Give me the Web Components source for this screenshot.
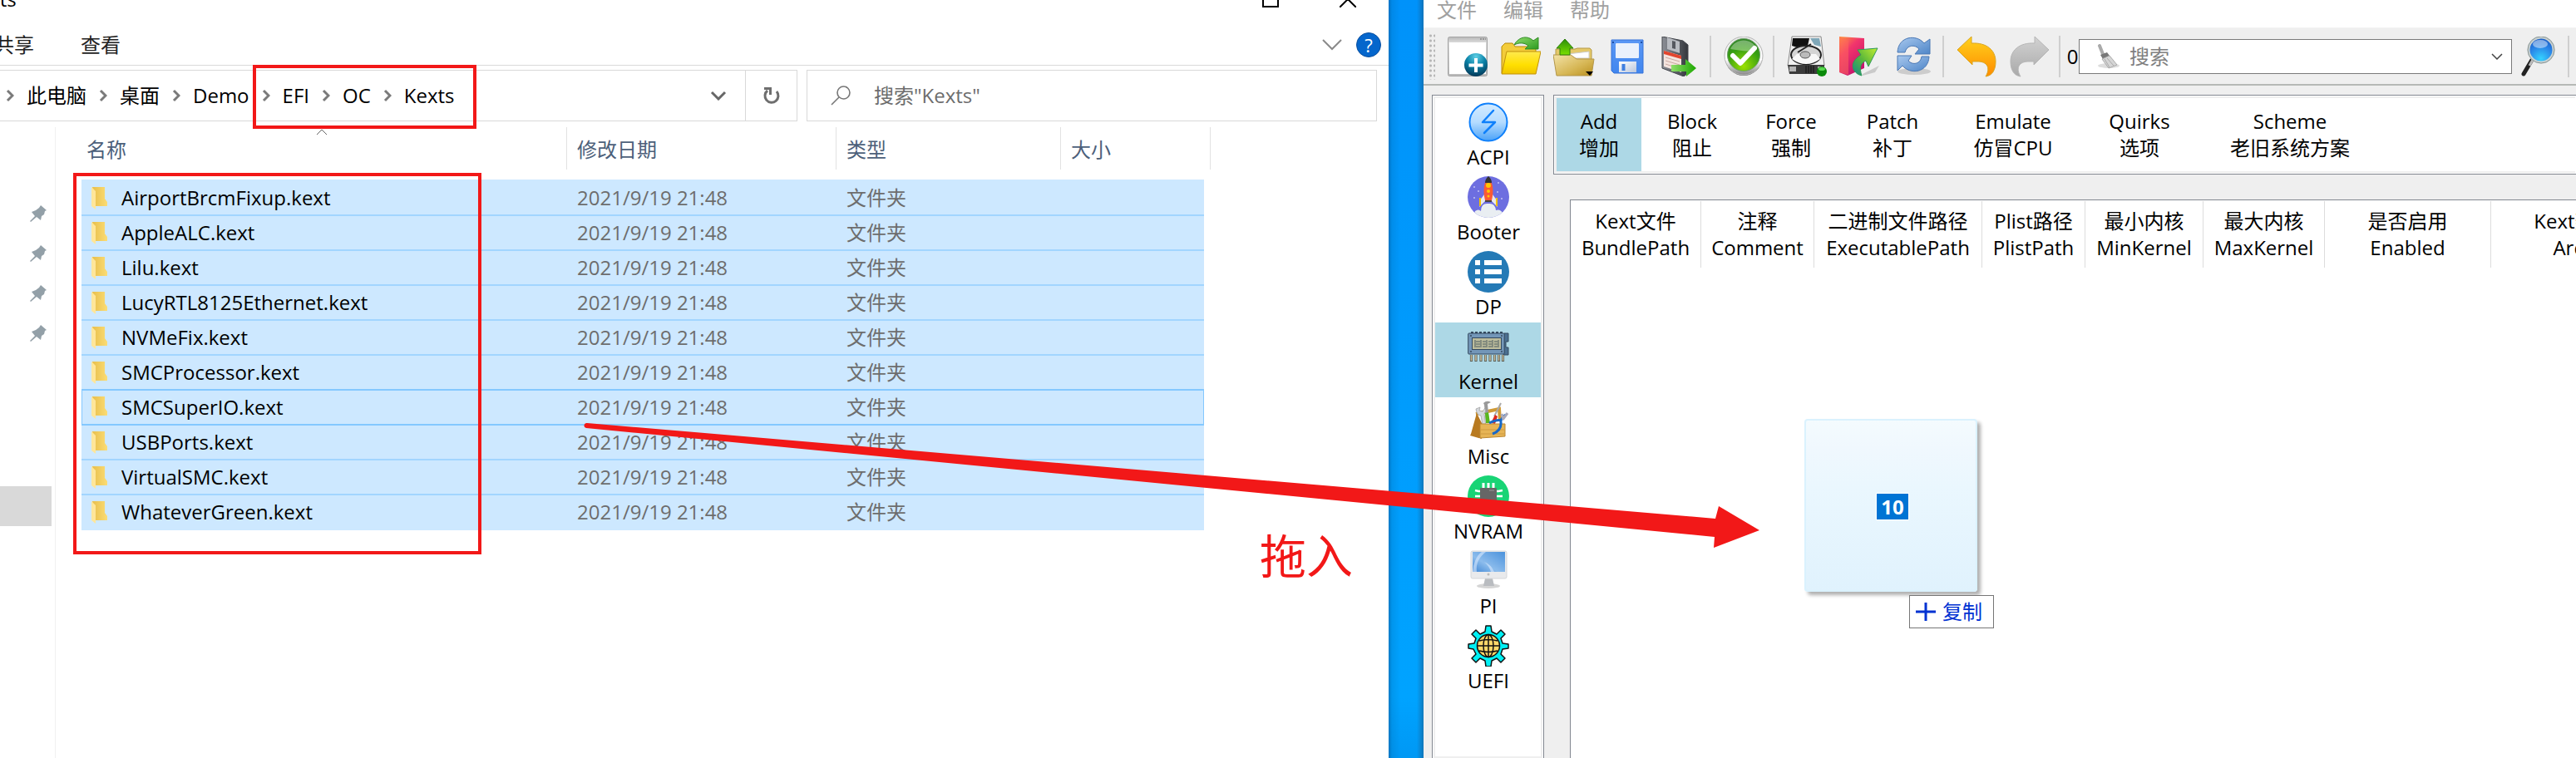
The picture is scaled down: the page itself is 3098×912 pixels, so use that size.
<!DOCTYPE html>
<html lang="zh-CN">
<head>
<meta charset="utf-8">
<title>Kexts</title>
<style>
  html, body { margin: 0; height: 100%; }
  body { font: 24px/32px "Open Sans", "Noto Sans CJK SC", sans-serif; color: #000; background: #fff; overflow: hidden; }
</style>
</head>
<body>
<desk-top>
  <explorer-window slot="left"></explorer-window>
  <config-window slot="right"></config-window>
</desk-top>

<script>
const ICONS = {
  page: ['0 0 48 48', `<defs><linearGradient id="a" x2="0" y2="1"><stop stop-color="#b8b8b8"/><stop offset=".15" stop-color="#ddd"/><stop offset="1" stop-color="#b9b9b9"/></linearGradient><radialGradient id="b" cx=".5" cy=".15" r=".9"><stop stop-color="#5fd0e6"/><stop offset=".45" stop-color="#0b83a8"/><stop offset="1" stop-color="#02304f"/></radialGradient></defs>
    <rect x=".5" y=".5" width="47" height="47" rx="2" fill="url(#a)" stroke="#a5a5a5"/><rect x="2" y="7" width="44" height="38" fill="#fff"/><path d="M39 3h2M42 3h2M45 3h1" stroke="#666"/><circle cx="34" cy="34" r="14" fill="url(#b)"/><path d="M34 26v17M25.500 34.500h17" stroke="#fff" stroke-width="4"/>`],
  open: ['0 0 48 48', `<defs><linearGradient id="a" x2="0" y2="1"><stop stop-color="#ffe94d"/><stop offset=".6" stop-color="#ffdf00"/><stop offset="1" stop-color="#f0c400"/></linearGradient><linearGradient id="b" x2="1" y2="1"><stop stop-color="#8fdc6a"/><stop offset="1" stop-color="#2c9a20"/></linearGradient></defs>
    <path d="M1 44V12l4-4h9l3 4h25v10" fill="#f3cc3a" stroke="#b98a07"/><path d="M7 18h41l-6 27H1z" fill="url(#a)" stroke="#c29208"/><path d="M16 10C22-1 33-1 39 5l6-4v14H29l4-4c-5-4-11-4-17-1z" fill="url(#b)" stroke="#2d8a20"/>`],
  up: ['0 0 50 48', `<defs><linearGradient id="a" x2="1" y2="1"><stop stop-color="#f3e3a8"/><stop offset=".6" stop-color="#d6b654"/><stop offset="1" stop-color="#b98f1f"/></linearGradient><linearGradient id="b" x2="0" y2="1"><stop stop-color="#2c8f0a"/><stop offset="1" stop-color="#7be000"/></linearGradient></defs>
    <path d="M3 26V15h23l3-1h15l2 2v14z" fill="#e5c96a" stroke="#b59a49"/><path d="M17 21l26-3v8H17z" fill="#fff" stroke="#ccc"/><path d="M0 22h21l7 5h21l-3 20H4z" fill="url(#a)" stroke="#b3964a"/><path d="M14 3l10 11h-4v8H8v-8H4z" fill="url(#b)" stroke="#2c7c0a"/><path d="M39 42h9l-4 5z"/>`],
  save: ['0 0 48 48', `<defs><linearGradient id="a" x2="0" y2="1"><stop stop-color="#5a97f5"/><stop offset="1" stop-color="#4186ee"/></linearGradient><linearGradient id="b" x2="1" y2="1"><stop stop-color="#fff"/><stop offset="1" stop-color="#b9c6dc"/></linearGradient></defs>
    <path d="M5 4h38v40H8l-3-3z" fill="url(#a)" stroke="#3672d8"/><rect x="10" y="8" width="28" height="18" rx="1" fill="#eaf1fc"/><rect x="14" y="30" width="21" height="13" fill="url(#b)"/><path d="M17.500 33h4v8h-4z" fill="#3f7fe0"/><path d="M6 6h2v2H6zM40 6h2v2h-2z" fill="#1d4ea6"/>`],
  export: ['0 0 48 48', `<defs><linearGradient id="a"><stop stop-color="#8d9097"/><stop offset="1" stop-color="#33363c"/></linearGradient><linearGradient id="b"><stop stop-color="#8fdd6a"/><stop offset="1" stop-color="#1da800"/></linearGradient></defs>
    <path d="M2 0l25 5 6 5v34l-5 4L2 38z" fill="url(#a)" stroke="#44474d"/><path d="M8 1l15 5v14L8 15z" fill="#b9bcc2"/><path d="M14 5l4 1v9l-4-1z" fill="#55585f"/><path d="M4 17l21 6v20L4 36z" fill="#f4e4de"/><path d="M4 17l21 6v4L4 21z" fill="#e2452e"/><path d="M6 25l17 5M6 29l17 5M6 33l12 4" stroke="#c9a8a0"/><path d="M13 34h17v-7l13 11-12 10v-6H13z" fill="url(#b)"/>`],
  check: ['0 0 48 48', `<defs><linearGradient id="a" x2="0" y2="1"><stop stop-color="#e8e8e8"/><stop offset=".6" stop-color="#fff"/><stop offset="1" stop-color="#888"/></linearGradient><radialGradient id="b" cx=".5" cy=".85" r=".9"><stop stop-color="#9be000"/><stop offset=".6" stop-color="#38a012"/><stop offset="1" stop-color="#2c7d28"/></radialGradient></defs>
    <ellipse cx="24" cy="26" rx="22" ry="21" fill="#777"/><circle cx="24" cy="23" r="23" fill="url(#a)" stroke="#b5b5b5"/><circle cx="24" cy="22" r="19.500" fill="url(#b)" stroke="#6f9f6a"/><path d="M8 15C14 1 34 1 40 15 32 20 18 16 8 15z" fill="#fff" opacity=".35"/><path d="M11 23l9 9 17-18" fill="none" stroke="#fff" stroke-width="6" stroke-linecap="round" stroke-linejoin="round"/>`],
  disk: ['0 0 48 50', `<path d="M6 1h35l4 35H1z" fill="#f0f0f0" stroke="#888"/><path d="M7 3h20l-2 9-10 3-9-3z" fill="#111"/><path d="M28 3h11l2 10-8-2z" fill="#7fa7b8"/><ellipse cx="23" cy="23" rx="18" ry="11" fill="#d4d4d4" stroke="#222" stroke-width="2"/><path d="M6 28q17 12 34 0l-5-6H12z" fill="#f8f8f8"/><ellipse cx="22" cy="23" rx="6" ry="4" fill="#bbb" stroke="#555"/><path d="M13 20l16-10" stroke="#222" stroke-width="2"/><path d="M1 35h44v11H3z" fill="#3b3b3b"/><path d="M3 37h8v6H3zM37 37h7v6h-7z" fill="#b5b5b5"/><path d="M23 36v9M26 36v9M29 36v9M32 36v9" stroke="#111"/><circle cx="42" cy="43" r="6" fill="#0a8a0a"/><ellipse cx="42" cy="40" rx="4" ry="2" fill="#58d84e"/>`],
  install: ['0 0 50 50', `<defs><linearGradient id="a" x2=".6" y2="1"><stop stop-color="#ff9a3c"/><stop offset=".4" stop-color="#f2356c"/><stop offset="1" stop-color="#c3146c"/></linearGradient><linearGradient id="b" x1="1" x2="0" y2="1"><stop stop-color="#c3ee30"/><stop offset=".5" stop-color="#5cb83a"/><stop offset="1" stop-color="#108a8a"/></linearGradient></defs>
    <path d="M28 46l20-10-5 8-15 4z" fill="#bbb" opacity=".7"/><path d="M0 1l30 2v36L10 48 0 44z" fill="url(#a)"/><path d="M0 1l11 5v41L0 44z" fill="#ff6a5a" opacity=".5"/><path d="M22 17l24-2-11 22-3-7c-7 3-8 9-5 18-12-3-16-16-1-25z" fill="url(#b)" stroke="#2f9a58"/>`],
  sync: ['0 0 48 48', `<defs><linearGradient id="a" x2="1" y2="1"><stop stop-color="#a8c8ee"/><stop offset="1" stop-color="#4f86c8"/></linearGradient></defs>
    <ellipse cx="25" cy="42" rx="20" ry="4" fill="#ccc"/><g fill="url(#a)" stroke="#4b78b4"><path d="M5 19C6-1 28-3 37 8l7-5v18H26l5-6c-5-6-15-5-17 4z"/><path d="M43 24c-1 20-23 22-32 11l-6 6V23h17l-4 6c5 6 15 4 16-5z"/></g>`],
  undo: ['0 0 48 50', `<defs><linearGradient id="a" x2="0" y2="1"><stop stop-color="#ffd21c"/><stop offset="1" stop-color="#ff8a00"/></linearGradient></defs><path d="M1 17L18 1v8C37 8 47 18 47 31c0 10-4 17-12 18 5-8 4-17-8-18h-8v4z" fill="url(#a)" stroke="#d9a520"/>`],
  redo: ['0 0 48 50', `<defs><linearGradient id="a" x2="0" y2="1"><stop stop-color="#d2d2d2"/><stop offset="1" stop-color="#a9a9a9"/></linearGradient></defs><path d="M47 17L30 1v8C11 8 1 18 1 31c0 10 4 17 12 18-5-8-4-17 8-18h8v4z" fill="url(#a)" stroke="#b5b5b5"/>`],
  find: ['0 0 48 48', `<defs><radialGradient id="a" cx=".5" cy=".85" r=".8"><stop stop-color="#35d2ff"/><stop offset=".6" stop-color="#2a86e8"/><stop offset="1" stop-color="#1c5fc8"/></radialGradient></defs>
    <path d="M16 28L6 45" stroke="#222" stroke-width="5" stroke-linecap="round"/><path d="M17 28l-4 7" stroke="#bbb" stroke-width="3"/><circle cx="27" cy="16" r="15" fill="url(#a)" stroke="#c9d2d2" stroke-width="3"/><circle cx="27" cy="16" r="16" fill="none" stroke="#8b9696"/><ellipse cx="26" cy="9" rx="9" ry="5" fill="#fff" opacity=".45"/>`],
  broom: ['0 0 28 30', `<ellipse cx="14" cy="26" rx="13" ry="3" fill="#ddd"/><path d="M3 2l4 10" stroke="#aaa" stroke-width="4" stroke-linecap="round"/><path d="M4 13l8-3 3 4-8 4z" fill="#777"/><path d="M6 18l9-4 9 11-10 4z" fill="#d5d5d5" stroke="#aaa"/><path d="M9 18l6 10M12 17l8 9" stroke="#aaa"/>`],
  acpi: ['0 0 50 50', `<defs><linearGradient id="a" x2="0" y2="1"><stop stop-color="#d3ebff"/><stop offset=".5" stop-color="#b5dcff"/><stop offset="1" stop-color="#4aa2f8"/></linearGradient></defs><circle cx="25" cy="25" r="22.500" fill="url(#a)" stroke="#0f80fb" stroke-width="2"/><path d="M31 11L18 25h15L20 38" fill="none" stroke="#0f80fb" stroke-width="2.500" stroke-linecap="round" stroke-linejoin="round"/>`],
  booter: ['0 0 50 50', `<clipPath id="c"><circle cx="25" cy="25" r="25"/></clipPath><g clip-path="url(#c)"><path d="M0 0h50v50H0z" fill="#6d6ee0"/><path d="M9 42q4-3 7 0 0-10 9-9 8-1 9 8 5-2 8 3v6H6z" fill="#e9eef2"/></g><path d="M20 22l-6 8v7l8-8zM30 22l6 8v7l-8-8z" fill="#e8e8ee"/><path d="M15 26v10M35 26v10" stroke="#f2c200" stroke-width="2"/><path d="M25 1c7 8 6 20 4 28h-8c-2-8-3-20 4-28z" fill="#fb5a36"/><path d="M25 0c3 3 4 5 4 8h-8c0-3 1-5 4-8z" fill="#333"/><path d="M21 29h8v2h-8z" fill="#444"/><circle cx="25" cy="11" r="3" fill="#ffc800"/><circle cx="25" cy="18" r="2" fill="#ffc800"/><circle cx="25" cy="24" r="1.500" fill="#ffc800"/><g fill="#fff"><circle cx="8" cy="13" r=".8"/><circle cx="13" cy="18" r=".8"/><circle cx="37" cy="8" r=".8"/><circle cx="41" cy="27" r=".8"/><circle cx="8" cy="26" r=".8"/><circle cx="36" cy="19" r=".8"/></g>`],
  dp: ['0 0 50 50', `<circle cx="25" cy="25" r="25" fill="#247ab6"/><path d="M9 11h6v6H9zM20 11h21v6H20zM9 22h6v6H9zM20 22h21v6H20zM9 33h6v6H9zM20 33h21v6H20z" fill="#fff"/>`],
  kernel: ['0 0 50 50', `<path d="M44 9h5v10h-3v7h3v9h-6z" fill="#4a6f90" stroke="#34495e"/><path d="M4 8h40" stroke="#34495e" stroke-width="2" stroke-dasharray="3 2"/><rect x=".7" y="9" width="43.500" height="25" rx="1" fill="#7396b8" stroke="#34495e"/><rect x="5.500" y="14.500" width="35" height="14" fill="#bcbc9c" stroke="#34495e"/><path d="M9 17v9M16 17v9M23 17v9M30 17v9M37 17v9M10 19h5M10 22h5M10 25h5M18 19h4M18 22h4M18 25h4M25 19h4M25 22h4M25 25h4M32 19h4M32 22h4M32 25h4" stroke="#4a5a60"/><path d="M4.500 35v8M10 35v8M16 35v8M21.500 35v8M27 35v8M32.500 35v8M37.500 35v8M42.500 35v8" stroke="#5b605a" stroke-width="3.200"/><path d="M4.500 35v7M10 35v7M16 35v7M21.500 35v7M27 35v7M32.500 35v7M37.500 35v7M42.500 35v7" stroke="#c4b796" stroke-width="1.600"/><g fill="#34495e"><circle cx="4" cy="12" r="1"/><circle cx="41" cy="12" r="1"/><circle cx="4" cy="31" r="1"/><circle cx="41" cy="31" r="1"/></g>`],
  misc: ['0 0 50 50', `<path d="M10 16l28-6 1 14" fill="none" stroke="#d09a35" stroke-width="4"/><path d="M4 40l7-25 7 14-1 17-14-4z" fill="#b87a20"/><path d="M19 3q4-4 9-1l-4 2 2 22h-4L20 5z" fill="#9a9a9a"/><path d="M21 15l4-1 2 13h-5z" fill="#58b81c"/><path d="M10 10q1 8 6 8l2 12h4l-2-14q3-3 1-7l-3 4-4-1 1-4z" fill="#d5d8dc" stroke="#999" stroke-width=".7"/><path d="M40 3l-8 16" stroke="#aaa" stroke-width="2"/><path d="M33 17l-5 10 5 1 3-9z" fill="#e02418"/><path d="M15 28h30v15l-30 2z" fill="#e6b455" stroke="#bb8732"/><path d="M16 35h28M16 40h28" stroke="#cf9a40"/><path d="M46 17q-7 5-6 9 1 10-10 14M26 27q10-5 15-3" fill="none" stroke="#1768c8" stroke-width="3"/><path d="M48 15l-6 8M41 16l2 6" stroke="#aab" stroke-width="3"/>`],
  nvram: ['0 0 50 50', `<circle cx="25" cy="25" r="25" fill="#18d475"/><path d="M19 9v32M25 9v32M31 9v32" stroke="#fff" stroke-width="3"/><path d="M9 18l4 1h24l5-1M9 25h33M9 32h33" fill="none" stroke="#fff" stroke-width="2.500"/><rect x="15" y="15" width="20" height="20" rx="1" fill="#666"/><path d="M26 18h6" stroke="#999"/>`],
  pi: ['0 0 50 50', `<defs><linearGradient id="a" x1="1" x2="0" y2="1"><stop stop-color="#4b92dc"/><stop offset=".6" stop-color="#8cbcec"/><stop offset="1" stop-color="#3f86d4"/></linearGradient></defs><ellipse cx="25" cy="43" rx="14" ry="3" fill="#d5d5d5"/><path d="M21 34h9l2 9H19z" fill="#b9bcc0"/><rect x="4" y="1" width="43" height="33" rx="2" fill="#e9eaec" stroke="#d5d7da"/><rect x="6" y="2" width="39" height="24" fill="url(#a)"/><path d="M6 26Q8 8 17 2h5Q9 12 11 26zM20 14q8 3 12 12h-4q-2-7-8-12z" fill="#d8eaff" opacity=".6"/><circle cx="25" cy="29" r="1.500" fill="#bbb"/>`],
  uefi: ['0 0 50 50', `<g fill="#00f0f4" stroke="#111" stroke-width="1.500" stroke-linejoin="round"><path d="M21 8l1-7h6l1 7 6 3 5-5 5 5-5 5 2 6 7 1v5l-7 1-2 6 5 5-5 5-5-5-6 3-1 7h-6l-1-7-6-3-5 5-5-5 5-5-3-6-6-1v-5l7-1 2-6-5-5 5-5 5 5z"/></g><g fill="none" stroke="#111" stroke-width="1.500"><circle cx="25" cy="25" r="13.500" fill="#ffd86a"/><ellipse cx="25" cy="25" rx="6" ry="13.500"/><path d="M25 11v28M11.500 25h27M14 19q11-3 22 0M14 31q11 3 22 0"/></g>`],
  pin: ['0 0 20 20', `<path d="M13 0l7 6-2 1-1 4-3 2-1 5-5-4-7 6-1-1 6-6-4-5 5-2 4-3z" fill="#93a0a8"/>`],
  folder: ['0 0 20 27', `<defs><linearGradient id="a"><stop stop-color="#e8bf4c"/><stop offset="1" stop-color="#fbdc74"/></linearGradient></defs><path d="M1 0h15v14l3 4v5H5z" fill="url(#a)"/><path d="M0 0l5 5v22l-5-4z" fill="#ffe69a"/>`],
  crumb: ['0 0 10 16', `<path d="M2 2l6 6-6 6" fill="none" stroke="#7a7a7a" stroke-width="3"/>`],
  down: ['0 0 24 14', `<path d="M1 1l11 11L23 1" fill="none" stroke="#8a8a8a" stroke-width="2"/>`],
  dropdown: ['0 0 20 12', `<path d="M2 2l8 8 8-8" fill="none" stroke="#666" stroke-width="3"/>`],
  thin: ['0 0 14 8', `<path d="M1 1l6 6 6-6" fill="none" stroke="#444" stroke-width="1.500"/>`],
  sort: ['0 0 14 8', `<path d="M1 7l6-6 6 6" fill="none" stroke="#666"/>`],
  reload: ['0 0 20 22', `<path d="M5 5a8 8 0 1 0 11 1" fill="none" stroke="#6e6e6e" stroke-width="3"/><path d="M1 1h9v9H7V4H1z" fill="#6e6e6e"/>`],
  lens: ['0 0 24 24', `<circle cx="15.500" cy="8.500" r="7.500" fill="none" stroke="#777" stroke-width="1.600"/><path d="M10 14L1 23" stroke="#777" stroke-width="1.600"/>`],
  maximize: ['0 0 20 20', `<path d="M1 1h18v18H1z" fill="none" stroke="#000" stroke-width="2"/>`],
  close: ['0 0 20 20', `<path d="M0 0l20 20M20 0L0 20" stroke="#000" stroke-width="2"/>`],
  help: ['0 0 30 30', `<circle cx="15" cy="15" r="14.500" fill="#0566cc" stroke="#0a4f9e"/>`],
  plus: ['0 0 24 24', `<path d="M12 1v22M0 12h24" stroke="#0032d2" stroke-width="3"/>`]
};

function define(name, html, setup) {
  const template = document.createElement('template');
  template.innerHTML = html;
  customElements.define(name, class extends HTMLElement {
    constructor() {
      super();
      this.attachShadow({ mode: 'open' }).append(template.content.cloneNode(true));
    }
    connectedCallback() { if (setup) setup(this, this.shadowRoot); }
  });
}

define('ui-icon', `<style>:host{display:block;flex:none;line-height:0}</style><span></span>`, (el, root) => {
  const [box, art] = ICONS[el.getAttribute('name')];
  const [, , w, h] = box.split(' ');
  root.querySelector('span').innerHTML = `<svg width="${w}" height="${h}" viewBox="${box}" aria-hidden="true">${art}</svg>`;
});

/* ---------- Toolbar pieces ---------- */
define('tool-button', `<style>
  :host{display:block;flex:none}
  button{display:flex;align-items:center;justify-content:center;width:64px;height:64px;padding:0;border:0;background:none}
</style><button type="button"><slot></slot></button>`, (el, root) => {
  root.querySelector('button').setAttribute('aria-label', el.getAttribute('label'));
});
define('tool-gap', `<style>
  :host{display:block;flex:none;box-sizing:border-box;width:12px;height:50px;padding-left:3px}
  i{display:block;width:2px;height:100%;background:#cfcfcf}
</style><i></i>`);

/* ---------- File explorer ---------- */
define('path-bar', `<style>
  :host{display:flex;align-items:center;height:62px;box-sizing:border-box;border:1px solid #d9d9d9;border-left:0}
  nav{display:flex;align-items:center;gap:15px;padding-left:7px;flex:1}
  a{color:#000;text-decoration:none}
  button{display:flex;align-items:center;justify-content:center;height:100%;padding:0;border:0;background:none}
  .drop{width:64px}.reload{width:62px;border-left:1px solid #d9d9d9}
</style>
<nav aria-label="路径"></nav>
<button class="drop" type="button" aria-label="展开"><ui-icon name="dropdown"></ui-icon></button>
<button class="reload" type="button" aria-label="刷新"><ui-icon name="reload"></ui-icon></button>`, (el, root) => {
  root.querySelector('nav').innerHTML = el.getAttribute('path').split('/')
    .map(p => `<ui-icon name="crumb"></ui-icon><a href="#">${p}</a>`).join('');
});

define('file-table', `<style>
  :host{display:block}
  table{table-layout:fixed;width:1358px;border-spacing:0}
  th{height:54px;padding:0 0 9px 12px;text-align:left;font-weight:400;color:#4c607a;
     background:linear-gradient(#e2e2e2,#e2e2e2) right top/1px 51px no-repeat;position:relative}
  th:first-child{padding-left:6px}
  th ui-icon{position:absolute;left:282px;top:1px}
  td{height:40px;padding:0 0 0 12px;border-top:2px solid #a2d5ff;background:#cde8ff;color:#6d6d6d;white-space:nowrap}
  tr:first-child td{border-top-color:#cde8ff}
  tr:last-child td{border-bottom:2px solid #cde8ff}
  .focus td,.focus+tr td{border-top-color:#84c8ff}
  .focus td:first-child{box-shadow:inset 1px 0 #84c8ff}
  .focus td:last-child{box-shadow:inset -1px 0 #84c8ff}
  .name{display:flex;align-items:center;gap:16px;color:#000}
</style>
<table><colgroup><col style="width:584px"><col style="width:324px"><col style="width:270px"><col style="width:172px"><col style="width:8px"></colgroup>
<thead><tr><th scope="col">名称<ui-icon name="sort"></ui-icon></th><th scope="col">修改日期</th><th scope="col">类型</th><th scope="col" colspan="2">大小</th></tr></thead>
<tbody></tbody></table>`, (el, root) => {
  const names = ['AirportBrcmFixup', 'AppleALC', 'Lilu', 'LucyRTL8125Ethernet', 'NVMeFix', 'SMCProcessor', 'SMCSuperIO', 'USBPorts', 'VirtualSMC', 'WhateverGreen'];
  root.querySelector('tbody').innerHTML = names.map(n =>
    `<tr class="${n === 'SMCSuperIO' ? 'focus' : ''}"><td><span class="name"><ui-icon name="folder"></ui-icon>${n}.kext</span></td><td>2021/9/19 21:48</td><td>文件夹</td><td></td></tr>`).join('');
});

define('explorer-window', `<style>
  :host{display:flex;flex-direction:column;min-width:0;background:#fff;margin-top:-32px}
  header,.ribbon{display:flex;align-items:center;justify-content:space-between}
  header{height:62px;padding-right:3px}
  header span{margin-left:-41px}
  .controls{display:flex}
  button{padding:0;border:0;background:none;font:inherit;color:inherit}
  .controls button{display:flex;justify-content:center;width:93px}
  .ribbon{height:48px;border-bottom:1px solid #d9d9d9;color:#222;padding-right:9px}
  .tabs{display:flex;gap:56px;margin-left:-7px}
  .tools{display:flex;align-items:center;gap:17px}
  .help{display:grid;place-items:center;color:#fff;font-size:22px}
  .help>*{grid-area:1/1}
  .bars{display:grid;grid-template-columns:minmax(0,959fr) minmax(0,686fr);gap:11px;padding:5px 14px 7px 0}
  label{display:flex;align-items:center;gap:28px;box-sizing:border-box;height:62px;padding-left:28px;border:1px solid #d9d9d9}
  input{flex:1;min-width:0;padding:0;border:0;outline:0;font:inherit;background:none}
  input::placeholder{color:#6d6d6d;opacity:1}
  .body{display:flex;flex:1}
  .side{width:66px;box-sizing:content-box;border-right:1px solid #f0f0f0;padding-top:80px}
  .side button{display:flex;align-items:center;width:62px;height:48px;padding-left:36px}
  .side .current{margin-top:160px;background:#d9d9d9}
  main{position:relative;padding-left:31px}
</style>
<header><span>Kexts</span><div class="controls"><button type="button" aria-label="最大化"><ui-icon name="maximize"></ui-icon></button><button type="button" aria-label="关闭"><ui-icon name="close"></ui-icon></button></div></header>
<div class="ribbon"><div class="tabs"><button type="button">共享</button><button type="button">查看</button></div>
<div class="tools"><button type="button" aria-label="展开功能区"><ui-icon name="down"></ui-icon></button><button class="help" type="button"><ui-icon name="help"></ui-icon><span>?</span></button></div></div>
<div class="bars"><path-bar path="此电脑/桌面/Demo/EFI/OC/Kexts"></path-bar>
<label aria-label="搜索"><ui-icon name="lens"></ui-icon><input type="text" placeholder='搜索"Kexts"'></label></div>
<div class="body"><div class="side">
<button type="button" aria-label="固定项 1"><ui-icon name="pin"></ui-icon></button><button type="button" aria-label="固定项 2"><ui-icon name="pin"></ui-icon></button><button type="button" aria-label="固定项 3"><ui-icon name="pin"></ui-icon></button><button type="button" aria-label="固定项 4"><ui-icon name="pin"></ui-icon></button><button class="current" type="button" aria-label="当前项"></button></div>
<main><file-table></file-table></main></div>`);

/* ---------- Configurator ---------- */
define('section-list', `<style>
  :host{display:block;box-sizing:border-box;border:1px solid #828790;background:#fff;padding:1px}
  nav{height:100%;box-sizing:border-box;border:2px solid #efefef}
  button{display:flex;flex-direction:column;align-items:center;width:100%;height:90px;padding:4px 0 0 1px;border:0;background:none;font:inherit;line-height:34px;color:#000}
  .on{background:#add8e6}
</style><nav></nav>`, (el, root) => {
  root.querySelector('nav').innerHTML = ['ACPI', 'Booter', 'DP', 'Kernel', 'Misc', 'NVRAM', 'PI', 'UEFI'].map(n =>
    `<button type="button" class="${n === 'Kernel' ? 'on' : ''}"><ui-icon name="${n.toLowerCase()}"></ui-icon>${n}</button>`).join('');
});

define('kernel-tabs', `<style>
  :host{display:block;box-sizing:border-box;height:96px;border:1px solid #828790;border-right:0;background:#fff;padding:1px}
  div{display:grid;grid-template-columns:102px 122px 116px 128px 162px 142px 220px;box-sizing:border-box;height:100%;border:2px solid #efefef;border-right:0}
  button{padding:0;border:0;background:none;font:inherit;line-height:32px;color:#000}
  button:first-child{background:#add8e6}
</style><div></div>`, (el, root) => {
  root.querySelector('div').innerHTML = [['Add', '增加'], ['Block', '阻止'], ['Force', '强制'], ['Patch', '补丁'], ['Emulate', '仿冒CPU'], ['Quirks', '选项'], ['Scheme', '老旧系统方案']]
    .map(([a, b]) => `<button type="button">${a}<br>${b}</button>`).join('');
});

define('kext-table', `<style>
  :host{display:block;position:relative;border:1px solid #828790;border-right:0;border-bottom:0;background:#fff;overflow:hidden}
  table{table-layout:fixed;width:1308px;border-spacing:0;margin-top:1px}
  th{height:80px;box-sizing:border-box;padding:0;border-right:1px solid #dcdcdc;font-weight:400;line-height:32px;white-space:nowrap}
</style><table><colgroup><col style="width:157px"><col style="width:136px"><col style="width:202px"><col style="width:124px"><col style="width:142px"><col style="width:146px"><col style="width:200px"><col style="width:201px"></colgroup><thead><tr></tr></thead></table><slot></slot>`, (el, root) => {
  root.querySelector('tr').innerHTML = [['Kext文件', 'BundlePath'], ['注释', 'Comment'], ['二进制文件路径', 'ExecutablePath'], ['Plist路径', 'PlistPath'], ['最小内核', 'MinKernel'], ['最大内核', 'MaxKernel'], ['是否启用', 'Enabled'], ['Kext架构', 'Arch']]
    .map(([a, b]) => `<th scope="col">${a}<br>${b}</th>`).join('');
});

define('config-window', `<style>
  :host{display:flex;flex-direction:column;min-width:0;background:#efefef;overflow:hidden}
  .menu{display:flex;gap:32px;height:33px;padding-left:16px;background:#fff;border-bottom:1px solid #f3f3f3}
  .menu button{height:24px;padding:0;border:0;background:none;font:inherit;line-height:24px;color:#a0a0a0}
  .bar{display:flex;align-items:center;height:67px;padding-right:1px;border-bottom:2px solid #b6b9b6}
  .grip{width:8px;height:56px;margin:0 7px 0 6px;background:radial-gradient(circle,#b5b5b5 1px,transparent 2px) 0 0/5px 6px}
  .count{width:15px;text-align:center}
  .combo{display:flex;align-items:center;flex:1;height:42px;box-sizing:border-box;border:1px solid #7a7a7a;background:#fff;padding:0 10px 0 21px}
  .combo input{flex:1;min-width:0;margin-left:11px;padding:0;border:0;outline:0;background:none;font:inherit}
  .combo input::placeholder{color:#808080;opacity:1}
  .combo button{padding:0;border:0;background:none}
  .work{display:grid;grid-template-columns:135px minmax(0,1fr);column-gap:11px;flex:1;padding:11px 0 0 10px}
  .pane{display:flex;flex-direction:column;min-width:0}
  kext-table{flex:1;margin:30px 0 0 20px}
  section-list{margin-bottom:-2px}
</style>
<div class="menu"><button type="button">文件</button><button type="button">编辑</button><button type="button">帮助</button></div>
<div class="bar"><i class="grip"></i>
<tool-button label="新建"><ui-icon name="page"></ui-icon></tool-button><tool-button label="打开"><ui-icon name="open"></ui-icon></tool-button><tool-button label="最近"><ui-icon name="up"></ui-icon></tool-button><tool-button label="保存"><ui-icon name="save"></ui-icon></tool-button><tool-button label="另存为"><ui-icon name="export"></ui-icon></tool-button><tool-gap></tool-gap>
<tool-button label="检查"><ui-icon name="check"></ui-icon></tool-button><tool-gap></tool-gap>
<tool-button label="挂载"><ui-icon name="disk"></ui-icon></tool-button><tool-button label="安装"><ui-icon name="install"></ui-icon></tool-button><tool-button label="同步"><ui-icon name="sync"></ui-icon></tool-button><tool-gap></tool-gap>
<tool-button label="撤销"><ui-icon name="undo"></ui-icon></tool-button><tool-button label="重做"><ui-icon name="redo"></ui-icon></tool-button><tool-gap></tool-gap>
<span class="count">0</span>
<div class="combo"><ui-icon name="broom"></ui-icon><input type="text" aria-label="搜索" placeholder="搜索"><button type="button" aria-label="历史"><ui-icon name="thin"></ui-icon></button></div>
<tool-button label="查找"><ui-icon name="find"></ui-icon></tool-button><tool-gap></tool-gap></div>
<div class="work"><section-list></section-list><div class="pane"><kernel-tabs></kernel-tabs><kext-table><drag-ghost></drag-ghost></kext-table></div></div>`);

/* The dragged selection hovers over the empty table area. */
define('drag-ghost', `<style>
  :host{position:absolute;left:281px;top:263px;width:208px;height:208px;box-sizing:border-box;border:2px solid #daf2fe;border-radius:4px;padding:2px 0 0 4px;
    background:linear-gradient(#f4fbfe,#f0f8fe 16%,#eaf7fe 40%,#e0f2fd);box-shadow:4px 4px 4px #00000050;display:grid;place-items:center}
  b{width:38px;height:31px;line-height:31px;text-align:center;color:#fff;background:#0074d4;outline:1px solid #fff}
  .tip{position:absolute;left:124px;top:210px;display:flex;align-items:center;gap:8px;box-sizing:border-box;width:102px;height:40px;padding-left:7px;border:1px solid #767676;background:#fff;color:#0032d2;white-space:nowrap}
</style><b>10</b><span class="tip"><ui-icon name="plus"></ui-icon>复制</span>`);

/* ---------- Desktop with the hand-drawn marks over both windows ---------- */
define('desk-top', `<style>
  :host{position:relative;display:grid;grid-template-columns:minmax(0,1670fr) 42px minmax(0,1386fr);min-height:100vh;overflow:hidden}
  .wall{background:linear-gradient(90deg,#00508c80,#0060a030 4px,transparent 14px,transparent 34px,#1c5a8890),linear-gradient(#0092fa,#00a3ff 92%,#0098f4)}
  .box{position:absolute;box-sizing:border-box;border:4px solid #f21818}
  .path{left:304px;top:78px;width:269px;height:77px}
  .files{left:88px;top:208px;width:491px;height:459px}
  .note{position:absolute;left:1515px;top:636px;font-size:56px;line-height:64px;color:#f21818}
  svg{position:absolute;left:700px;top:500px}
</style>
<slot name="left"></slot><div class="wall"></div><slot name="right"></slot>
<i class="box path"></i><i class="box files"></i><span class="note">拖入</span>
<svg width="1420" height="170" aria-hidden="true"><path d="M6 9L1363 124L1367 109L1416 138L1361 159L1362 146L5 15A3 3 0 0 1 6 9Z" fill="#f21818"/></svg>`);
</script>
</body>
</html>
